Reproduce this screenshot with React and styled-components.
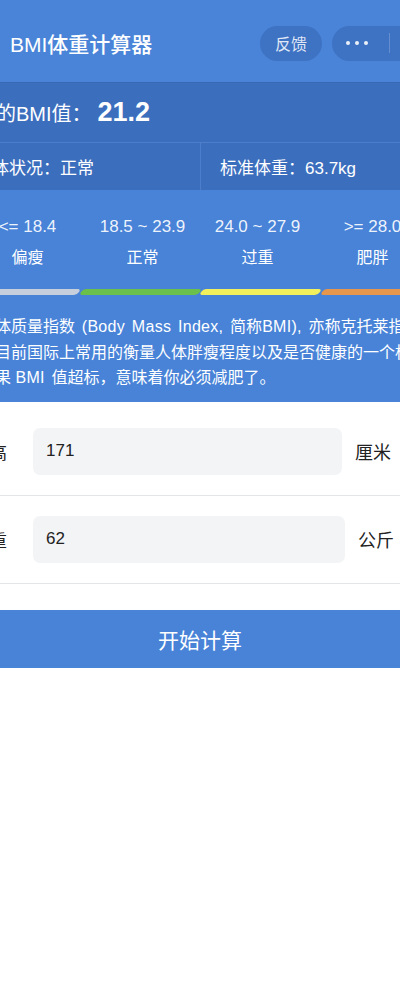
import React from "react";
import styled, { createGlobalStyle } from "styled-components";

const GlobalStyle = createGlobalStyle`
  body {
    margin: 0;
    background: #fff;
    font-family: "Liberation Sans", "Noto Sans CJK SC", sans-serif;
  }
`;

const Page = styled.div`
  width: 400px;
  min-height: 982px;
  overflow: hidden;
  background: #fff;
`;

const NavBar = styled.div`
  height: 82px;
  display: flex;
  align-items: center;
  padding: 4px 0 0 10px;
  box-sizing: border-box;
  background: #4984d8;
  color: #fff;
`;

const Title = styled.h1`
  flex: 1;
  margin: 0;
  font-size: 21px;
  font-weight: 500;
`;

const Pill = styled.div`
  height: 35px;
  border-radius: 18px;
  background: #3e72c3;
  color: rgba(255, 255, 255, 0.85);
  display: flex;
  align-items: center;
  flex-shrink: 0;
  font-size: 16px;
`;

const Feedback = styled(Pill)`
  width: 62px;
  justify-content: center;
`;

const Capsule = styled(Pill)`
  width: 100px;
  margin-left: 10px;
  margin-right: -32px;
  padding-left: 14px;
  box-sizing: border-box;
  gap: 5px;
  .dot {
    width: 4px;
    height: 4px;
    border-radius: 50%;
    background: rgba(255, 255, 255, 0.9);
  }
  .divider {
    width: 1px;
    height: 20px;
    margin-left: 16px;
    background: rgba(255, 255, 255, 0.2);
  }
`;

const Wide = styled.div`
  width: 460px;
  margin-left: -30px;
`;

const ResultBand = styled.div`
  background: #3c6ebe;
  color: #fff;
  border-top: 1px solid #3a69b4;
`;

const BmiRow = styled.div`
  height: 59px;
  display: flex;
  align-items: center;
  padding-left: 6px;
  font-size: 20px;
  border-bottom: 1px solid #4c7ecb;
  strong {
    font-size: 27px;
    font-weight: bold;
    margin-left: 6px;
  }
`;

const InfoRow = styled.div`
  display: grid;
  grid-template-columns: 230px 1fr;
  height: 47px;
`;

const InfoCell = styled.div`
  display: flex;
  align-items: center;
  padding-left: ${(p) => p.$pad}px;
  font-size: 17px;
  border-left: ${(p) => (p.$divider ? "1px solid #4c7ecb" : "none")};
`;

const Scale = styled.div`
  background: #4883d8;
  color: #fff;
  padding-top: 27px;
`;

const ScaleGrid = styled.div`
  display: grid;
  grid-template-columns: repeat(4, 115px);
  text-align: center;
  line-height: 20px;
  .range {
    font-size: 17px;
    color: rgba(255, 255, 255, 0.92);
  }
  .name {
    font-size: 16px;
    margin-top: 11px;
  }
`;

const Bar = styled.div`
  display: flex;
  gap: 2px;
  height: 6px;
  margin: 21px 0 0 -10px;
  width: 480px;
`;

const Segment = styled.div`
  flex: 1;
  background: ${(p) => p.$color};
  border-radius: 3px;
  transform: skewX(-35deg);
`;

const Desc = styled.p`
  margin: 0;
  padding: 19px 0 11px 9px;
  font-size: 16px;
  line-height: 25.5px;
  white-space: nowrap;
  color: #fff;
  background: #4883d8;
`;

const Latin = styled.span`
  letter-spacing: 0.3px;
  word-spacing: 2px;
`;

const Form = styled.div`
  padding-top: 6px;
  background: #fff;
`;

const FieldRow = styled.div`
  display: flex;
  align-items: center;
  padding: 20px 0;
  border-bottom: 1px solid #e4e5e7;
`;

const Label = styled.div`
  width: 60px;
  padding-left: 3px;
  font-size: 17px;
  color: #222;
`;

const Input = styled.div`
  flex: 1;
  height: 47px;
  border-radius: 7px;
  background: #f3f4f6;
  display: flex;
  align-items: center;
  padding-left: 13px;
  font-size: 17px;
  color: #222;
`;

const Unit = styled.div`
  width: ${(p) => p.$w}px;
  box-sizing: border-box;
  padding-left: 13px;
  font-size: 18px;
  color: #222;
`;

const StartButton = styled.button`
  display: block;
  width: 100%;
  height: 58px;
  margin-top: 26px;
  border: none;
  background: #4883d8;
  color: #fff;
  font-family: inherit;
  font-size: 21px;
`;

const levels = [
  { range: "<= 18.4", name: "偏瘦", color: "#c8cfdc" },
  { range: "18.5 ~ 23.9", name: "正常", color: "#6bbf4b" },
  { range: "24.0 ~ 27.9", name: "过重", color: "#f2f05c" },
  { range: ">= 28.0", name: "肥胖", color: "#e6974b" },
];

const App = () => {
  return (
    <Page>
      <GlobalStyle />
      <NavBar>
        <Title>BMI体重计算器</Title>
        <Feedback>反馈</Feedback>
        <Capsule>
          <span className="dot" />
          <span className="dot" />
          <span className="dot" />
          <span className="divider" />
        </Capsule>
      </NavBar>

      <Wide>
        <ResultBand>
          <BmiRow>
            您的BMI值：<strong>21.2</strong>
          </BmiRow>
          <InfoRow>
            <InfoCell $pad={5}>身体状况：正常</InfoCell>
            <InfoCell $pad={19} $divider>
              标准体重：63.7kg
            </InfoCell>
          </InfoRow>
        </ResultBand>

        <Scale>
          <ScaleGrid>
            {levels.map((l) => (
              <div key={l.name}>
                <div className="range">{l.range}</div>
                <div className="name">{l.name}</div>
              </div>
            ))}
          </ScaleGrid>
          <Bar>
            {levels.map((l) => (
              <Segment key={l.name} $color={l.color} />
            ))}
          </Bar>
        </Scale>

        <Desc>
          身体质量指数<Latin> (Body Mass Index, </Latin>简称<Latin>BMI), </Latin>
          亦称克托莱指数，
          <br />
          是目前国际上常用的衡量人体胖瘦程度以及是否健康的一个标准。
          <br />
          如果 <Latin>BMI </Latin>值超标，意味着你必须减肥了。
        </Desc>

        <Form>
          <FieldRow>
            <Label>身高</Label>
            <Input>171</Input>
            <Unit $w={88}>厘米</Unit>
          </FieldRow>
          <FieldRow>
            <Label>体重</Label>
            <Input>62</Input>
            <Unit $w={85}>公斤</Unit>
          </FieldRow>
        </Form>

        <StartButton>开始计算</StartButton>
      </Wide>
    </Page>
  );
};

export default App;
